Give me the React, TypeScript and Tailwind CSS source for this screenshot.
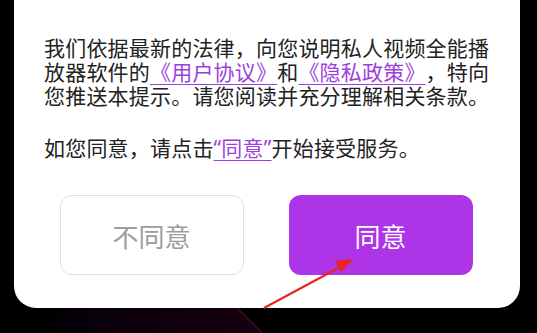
import React from "react";

const font = { fontFamily: '"Noto Sans CJK SC", "Noto Sans", sans-serif' };
const latin = { fontFamily: '"Noto Sans", sans-serif' };

export default function App() {
  return (
    <div className="relative w-[537px] h-[333px] bg-black overflow-hidden [text-spacing-trim:space-all]" style={font}>
      <div className="mx-[14px] w-[506px] h-[308px] bg-white rounded-b-[22px] pt-[35px] pl-[30px]">
        <p className="w-[448px] text-[21px] leading-[24px] tracking-[0.2px] text-[#222222]">
          我们依据最新的法律，向您说明私人视频全能播放器软件的
          <span className="text-[#9b3fdc] underline decoration-1 underline-offset-[4px]">《用户协议》</span>
          和
          <span className="text-[#9b3fdc] underline decoration-1 underline-offset-[4px]">《隐私政策》</span>
          ，特向您推送本提示。请您阅读并充分理解相关条款。
        </p>
        <p className="mt-[28px] text-[21px] leading-[24px] tracking-[0.2px] text-[#222222]">
          如您同意，请点击
          <span className="text-[#9b3fdc] underline decoration-1 underline-offset-[4px]">
            <span style={latin}>“</span>同意<span style={latin}>”</span>
          </span>
          开始接受服务。
        </p>
        <div className="mt-[35px] -ml-[30px] flex justify-center gap-[45px] pr-[2px]">
          <button className="w-[184px] h-[80px] rounded-[12px] border-[1.5px] border-[#e0e0e0] bg-white text-[26px] text-[#9c9c9c]">
            不同意
          </button>
          <button className="w-[184px] h-[80px] rounded-[12px] bg-[#ae34e8] text-[26px] text-white">
            同意
          </button>
        </div>
      </div>
      <svg className="block" width="537" height="25" viewBox="0 0 537 25">
        <defs>
          <linearGradient id="bgp" x1="0" x2="1" y1="0" y2="0">
            <stop offset="0" stopColor="#000000" />
            <stop offset="0.2" stopColor="#07000a" />
            <stop offset="1" stopColor="#17000f" />
          </linearGradient>
        </defs>
        <polygon points="40,0 237,0 262,25 40,25" fill="url(#bgp)" />
        <line x1="237" y1="0" x2="262" y2="25" stroke="#3a1028" strokeWidth="1.5" />
      </svg>
      <svg className="absolute left-0 top-0" width="537" height="333" viewBox="0 0 537 333">
        <line x1="264" y1="308" x2="342" y2="266" stroke="#e8261f" strokeWidth="2.2" />
        <polygon points="354,259 335,261 341,272" fill="#e8261f" />
      </svg>
    </div>
  );
}
